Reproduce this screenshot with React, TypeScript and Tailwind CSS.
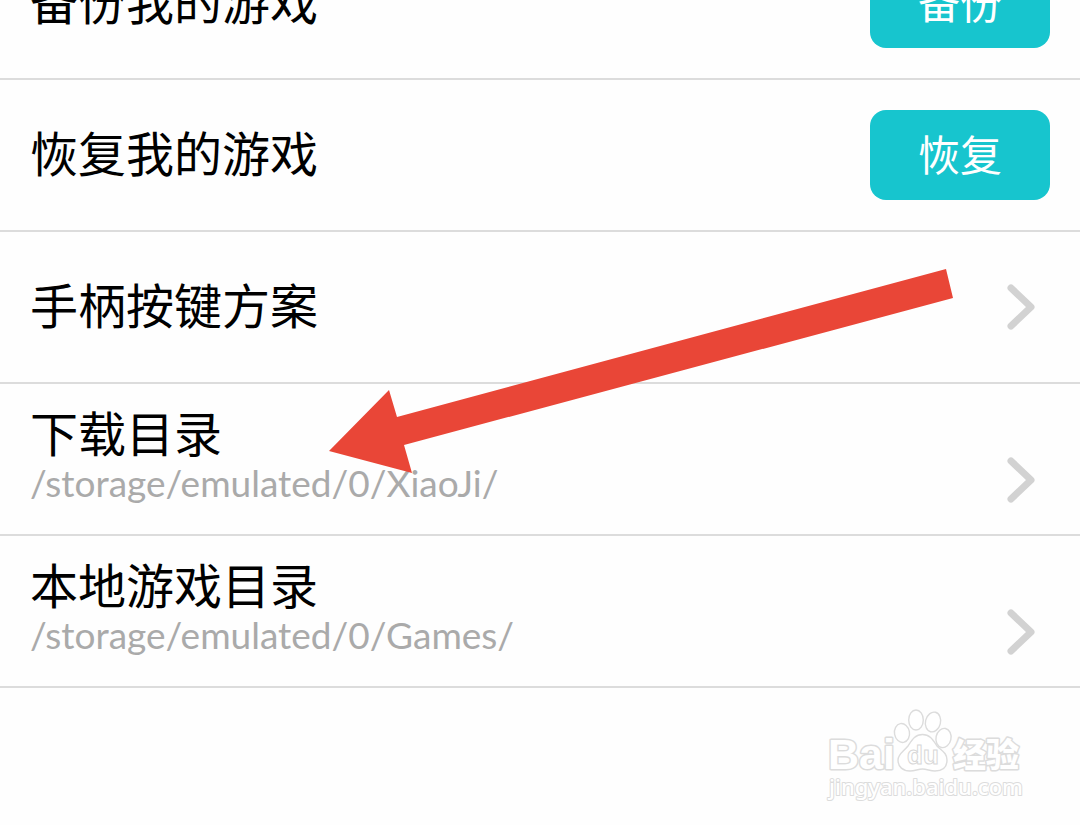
import type { ReactNode } from "react";

const cjk = "font-['Noto_Sans_CJK_SC',sans-serif]";

function ActionRow({ title, action }: { title: string; action: string }) {
  return (
    <li className="flex h-[152px] items-center justify-between border-b-2 border-[#dcdcdc] px-[30px]">
      <span className="pb-2 text-5xl leading-12">{title}</span>
      <button type="button" className="h-[90px] w-[180px] rounded-2xl bg-[#17c5ce] pb-1 text-[42px] leading-12 text-white">
        {action}
      </button>
    </li>
  );
}

function Chevron() {
  return (
    <svg width="28" height="46" viewBox="0 0 28 46" fill="none" className="shrink-0" aria-hidden="true">
      <path d="M4 4 L24 23 L4 42" stroke="#d2d2d2" strokeWidth="7" strokeLinecap="round" strokeLinejoin="round" />
    </svg>
  );
}

function LinkRow({ title, path }: { title: string; path?: string }) {
  return (
    <li className="border-b-2 border-[#dcdcdc]">
      <button
        type="button"
        className={`flex h-[150px] w-full justify-between pr-[45px] pl-[30px] text-left ${path ? "items-end pb-[31px]" : "items-center"}`}
      >
        <span className="flex flex-col">
          <span className="pb-2 text-5xl leading-12">{title}</span>
          {path && <span className="font-[Lato,sans-serif] text-[37px] leading-10 text-[#aaaaaa]">{path}</span>}
        </span>
        <Chevron />
      </button>
    </li>
  );
}

function Outline({ children }: { children: ReactNode }) {
  return (
    <g fill="#ffffff" stroke="#dcdcdc" strokeWidth="3" strokeLinejoin="round" style={{ paintOrder: "stroke" }}>
      {children}
    </g>
  );
}

function Watermark() {
  return (
    <svg width="208" height="100" viewBox="0 0 208 100" role="img" aria-label="Baidu">
      <Outline>
        <text x="4" y="65" fontSize="43" fontWeight="700" fontFamily="Liberation Sans, sans-serif">Bai</text>
        <text x="129" y="63" fontSize="33" fontWeight="900" fontFamily="Noto Sans CJK SC, sans-serif">经验</text>
        <text x="5" y="91" fontSize="22" fontWeight="500" strokeWidth="2" fontFamily="Noto Sans, sans-serif">jingyan.baidu.com</text>
      </Outline>
      <g fill="#ffffff" stroke="#dcdcdc" strokeWidth="1.4">
        <ellipse cx="78" cy="29" rx="7.5" ry="9.5" transform="rotate(-10 78 29)" />
        <ellipse cx="92" cy="16" rx="7.3" ry="10" />
        <ellipse cx="109" cy="18" rx="7.5" ry="10" transform="rotate(14 109 18)" />
        <ellipse cx="119.5" cy="34" rx="7.5" ry="9.7" transform="rotate(12 119.5 34)" />
        <path d="M98.5 30.5 C91 30.5 88 36 84 42 C79 48 74 50 74 56 C74 63 79 67 86 67 C91 67 94 65 98.5 65 C103 65 106 67 111 67 C119 67 123 63 123 56 C123 49 118 47 113 42 C109 36 106 30.5 98.5 30.5 Z" />
      </g>
      <text x="83" y="60" fontSize="26" fill="#ffffff" stroke="#d8d8d8" strokeWidth="1" fontFamily="Liberation Sans, sans-serif" fontWeight="700">du</text>
    </svg>
  );
}

export default function App() {
  return (
    <main className={`relative min-h-screen overflow-hidden bg-[#fefefe] text-black ${cjk}`}>
      {/* the list is scrolled part of the way past its first row */}
      <ul className="-mt-[72px]">
        <ActionRow title="备份我的游戏" action="备份" />
        <ActionRow title="恢复我的游戏" action="恢复" />
        <LinkRow title="手柄按键方案" />
        <LinkRow title="下载目录" path="/storage/emulated/0/XiaoJi/" />
        <LinkRow title="本地游戏目录" path="/storage/emulated/0/Games/" />
      </ul>

      <footer className="flex justify-end pt-4 pr-12">
        <Watermark />
      </footer>

      <svg
        width="624"
        height="206"
        viewBox="0 0 624 206"
        className="pointer-events-none absolute top-[268px] left-[329px]"
        aria-hidden="true"
      >
        <polygon points="0,183 60,122 68,149 617,1 624,30 75,177 83,205" fill="#e94637" />
      </svg>
    </main>
  );
}
